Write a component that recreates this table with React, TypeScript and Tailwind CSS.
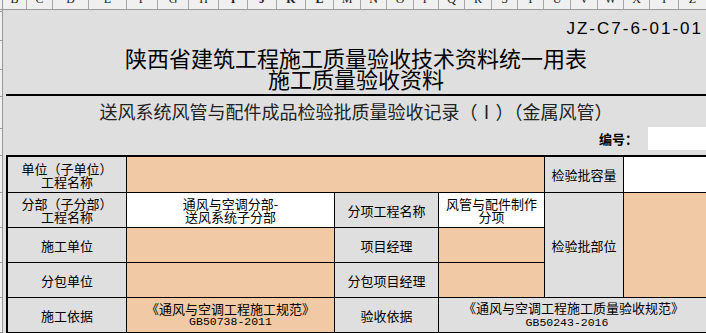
import type { ReactNode } from 'react';

const cjk = { fontFamily: '"Noto Sans CJK SC", "Noto Sans", sans-serif' };

const headers = [
  { l: 'B', w: 'w-[24px]' },
  { l: 'C', w: 'w-[26px]' },
  { l: 'D', w: 'w-[36px]' },
  { l: 'E', w: 'w-[38px]' },
  { l: 'F', w: 'w-[31px]' },
  { l: 'G', w: 'w-[31px]' },
  { l: 'H', w: 'w-[30px]' },
  { l: 'I', w: 'w-[29px]', sel: true },
  { l: 'J', w: 'w-[29px]', sel: true },
  { l: 'K', w: 'w-[29px]', sel: true },
  { l: 'L', w: 'w-[28px]', sel: true },
  { l: 'M', w: 'w-[27px]' },
  { l: 'N', w: 'w-[26px]' },
  { l: 'O', w: 'w-[27px]' },
  { l: 'P', w: 'w-[25px]' },
  { l: 'Q', w: 'w-[26px]' },
  { l: 'R', w: 'w-[27px]' },
  { l: 'S', w: 'w-[26px]' },
  { l: 'T', w: 'w-[26px]' },
  { l: 'U', w: 'w-[27px]' },
  { l: 'V', w: 'w-[27px]' },
  { l: 'W', w: 'w-[26px]' },
  { l: 'X', w: 'w-[26px]' },
  { l: 'Y', w: 'w-[29px]' },
  { l: 'Z', w: 'w-[28px]' },
];

function Cell({ className, children }: { className: string; children?: ReactNode }) {
  return (
    <div
      className={`border-r border-b border-black flex flex-col items-center justify-center text-center text-[13px] leading-[13px] text-black ${className}`}
    >
      {children}
    </div>
  );
}

function Mono({ children }: { children: ReactNode }) {
  return (
    <span className="text-[11.5px] leading-[13px]" style={{ fontFamily: '"Liberation Mono", monospace' }}>
      {children}
    </span>
  );
}

export default function App() {
  return (
    <div className="w-[706px] h-[333px] overflow-hidden bg-[#dfdfdf] flex flex-col" style={cjk}>
      {/* column headers, only the lower half is on screen */}
      <div className="h-[10px] flex shrink-0 overflow-hidden bg-[#f0f0f0] border-b border-[#9a9a9a]">
        <div className="w-[3px] shrink-0 border-r border-[#9a9a9a]" />
        {headers.map(h => (
          <div
            key={h.l}
            className={`${h.w} shrink-0 border-r border-[#a8a8a8] flex justify-center overflow-hidden`}
          >
            <span
              className={`block -mt-[8px] text-[12px] leading-[14px] text-[#222] ${h.sel ? 'font-bold' : ''}`}
              style={{ fontFamily: '"Liberation Serif", serif' }}
            >
              {h.l}
            </span>
          </div>
        ))}
      </div>

      <div className="flex flex-1 min-h-0">
        {/* row header strip */}
        <div className="w-[3px] shrink-0 bg-[#f0f0f0] border-r border-[#9a9a9a] flex flex-col">
          <div className="h-[2px] border-b border-[#9a9a9a]" />
          <div className="h-[29px] border-b border-[#9a9a9a]" />
          <div className="h-[29px] border-b border-[#9a9a9a]" />
          <div className="h-[27px] border-b border-[#9a9a9a]" />
          <div className="h-[32px] border-b border-[#9a9a9a]" />
          <div className="h-[27px] border-b border-[#9a9a9a]" />
          <div className="h-[37px] border-b border-[#9a9a9a]" />
          <div className="h-[35px] border-b border-[#9a9a9a]" />
          <div className="h-[35px] border-b border-[#9a9a9a]" />
          <div className="h-[35px] border-b border-[#9a9a9a]" />
          <div className="h-[35px] border-b border-[#9a9a9a]" />
        </div>

        <div className="flex-1 min-w-0 ml-[3px] flex flex-col">
          {/* title block */}
          <div className="h-[84px] shrink-0 flex flex-col">
            <div
              className="mt-[8px] h-[22px] leading-[22px] text-right pr-[3px] text-[17px] tracking-[2px] text-black"
              style={{ fontFamily: '"Liberation Sans", Arial, sans-serif' }}
            >
              JZ-C7-6-01-01
            </div>
            <div className="mt-[7px] text-center text-[22px] leading-[21px] text-black">
              <div>陕西省建筑工程施工质量验收技术资料统一用表</div>
              <div>施工质量验收资料</div>
            </div>
          </div>

          {/* subtitle block */}
          <div className="h-[61px] shrink-0 border-t-2 border-black flex flex-col">
            <div className="mt-[5px] h-[20px] leading-[20px] text-center text-[18px] text-[#222]">
              送风系统风管与配件成品检验批质量验收记录（Ⅰ）（金属风管）
            </div>
            <div className="mt-[6px] h-[23px] flex justify-end items-center">
              <span className="text-[13px] font-bold text-black mr-[10px]">编号：</span>
              <div className="w-[58px] h-[23px] bg-white" />
            </div>
          </div>

          {/* table */}
          <div className="grid grid-cols-[119px_208px_104px_106px_79px_120px] grid-rows-[36px_35px_35px_35px_35px] border-l-2 border-t-2 border-black">
            <Cell className="col-start-1 row-start-1 bg-[#dfdfdf] leading-[12.5px]">
              <span>单位（子单位）</span>
              <span>工程名称</span>
            </Cell>
            <Cell className="col-start-2 col-span-3 row-start-1 bg-[#f1c9a5]" />
            <Cell className="col-start-5 row-start-1 bg-[#dfdfdf]">检验批容量</Cell>
            <Cell className="col-start-6 row-start-1 bg-white" />

            <Cell className="col-start-1 row-start-2 bg-[#dfdfdf] leading-[12.5px]">
              <span>分部（子分部）</span>
              <span>工程名称</span>
            </Cell>
            <Cell className="col-start-2 row-start-2 bg-white">
              <span>通风与空调分部-</span>
              <span>送风系统子分部</span>
            </Cell>
            <Cell className="col-start-3 row-start-2 bg-[#dfdfdf]">分项工程名称</Cell>
            <Cell className="col-start-4 row-start-2 bg-white">
              <span>风管与配件制作</span>
              <span>分项</span>
            </Cell>
            <Cell className="col-start-5 row-start-2 row-span-3 bg-[#dfdfdf]">检验批部位</Cell>
            <Cell className="col-start-6 row-start-2 row-span-3 bg-[#f1c9a5]" />

            <Cell className="col-start-1 row-start-3 bg-[#dfdfdf]">施工单位</Cell>
            <Cell className="col-start-2 row-start-3 bg-[#f1c9a5]" />
            <Cell className="col-start-3 row-start-3 bg-[#dfdfdf]">项目经理</Cell>
            <Cell className="col-start-4 row-start-3 bg-[#f1c9a5]" />

            <Cell className="col-start-1 row-start-4 bg-[#dfdfdf]">分包单位</Cell>
            <Cell className="col-start-2 row-start-4 bg-[#f1c9a5]" />
            <Cell className="col-start-3 row-start-4 bg-[#dfdfdf]">分包项目经理</Cell>
            <Cell className="col-start-4 row-start-4 bg-[#f1c9a5]" />

            <Cell className="col-start-1 row-start-5 bg-[#dfdfdf]">施工依据</Cell>
            <Cell className="col-start-2 row-start-5 bg-[#f1c9a5]">
              <span>《通风与空调工程施工规范》</span>
              <Mono>GB50738-2011</Mono>
            </Cell>
            <Cell className="col-start-3 row-start-5 bg-[#dfdfdf]">验收依据</Cell>
            <Cell className="col-start-4 col-span-3 row-start-5 bg-[#dfdfdf] !items-start pl-[24px]">
              <span>《通风与空调工程施工质量验收规范》</span>
              <span className="self-center -ml-[24px] pr-[48px]">
                <Mono>GB50243-2016</Mono>
              </span>
            </Cell>
          </div>
        </div>
      </div>
    </div>
  );
}
